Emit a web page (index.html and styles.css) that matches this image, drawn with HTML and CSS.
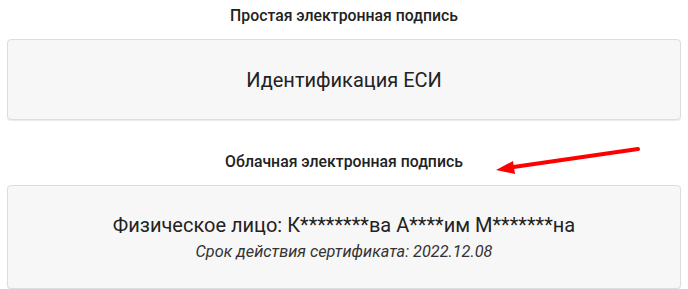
FILE: index.html
```html
<!DOCTYPE html>
<html lang="ru">
<head>
<meta charset="utf-8">
<link rel="stylesheet" href="styles.css">
</head>
<body>
<div class="page">
  <div class="section-title first">Простая электронная подпись</div>
  <div class="card card-esi">
    <div class="card-main">Идентификация ЕСИ</div>
  </div>
  <div class="section-title second">Облачная электронная подпись</div>
  <div class="card card-cloud">
    <div class="card-main">Физическое лицо: К********ва А****им М*******на</div>
    <div class="card-sub">Срок действия сертификата: 2022.12.08</div>
  </div>
  <svg class="arrow" width="688" height="289" viewBox="0 0 688 289">
    <line x1="638" y1="149" x2="510" y2="167.5" stroke="#ff0000" stroke-width="4" stroke-linecap="round"/>
    <polygon points="496,170 513,161 515,174" fill="#ff0000"/>
  </svg>
</div>
</body>
</html>
```
FILE: styles.css
```css
html, body {
  margin: 0;
  padding: 0;
  background: #ffffff;
}
.page {
  position: relative;
  width: 688px;
  height: 289px;
  overflow: hidden;
  padding: 0 7px;
  box-sizing: border-box;
  font-family: Roboto, "Noto Sans", sans-serif;
  color: #333333;
}
.section-title {
  font-size: 15.8px;
  font-weight: 500;
  line-height: 20px;
  text-align: center;
  color: #222222;
}
.section-title.first {
  padding-top: 6px;
  margin-bottom: 13px;
}
.section-title.second {
  margin-top: 32px;
  margin-bottom: 13px;
}
.card {
  background: #f7f7f7;
  border: 1px solid #dddddd;
  border-radius: 4px;
  box-shadow: 0 1px 1px rgba(0, 0, 0, 0.08);
  text-align: center;
  width: 674px;
  box-sizing: border-box;
}
.card-esi {
  padding: 28px 0 27px;
}
.card-cloud {
  padding: 27px 0 26px;
}
.card-main {
  font-size: 20px;
  line-height: 24px;
  color: #222222;
}
.card-sub {
  font-size: 16.3px;
  line-height: 20px;
  font-style: italic;
  margin-top: 5px;
  color: #333333;
}
.arrow {
  position: absolute;
  left: 0;
  top: 0;
  pointer-events: none;
}
```
